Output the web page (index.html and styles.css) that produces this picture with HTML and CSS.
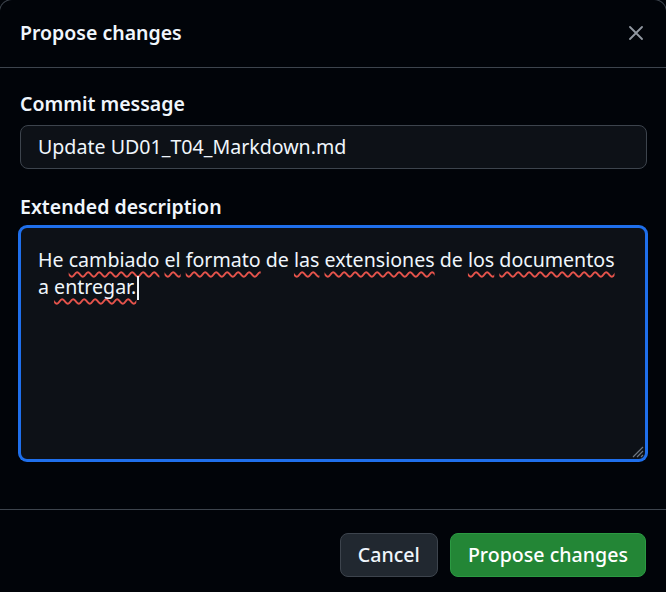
FILE: index.html
```html
<!DOCTYPE html>
<html lang="en">
<head>
<meta charset="utf-8">
<title>Propose changes</title>
<link rel="stylesheet" href="styles.css">
</head>
<body>
<div class="dialog">
  <header class="dialog-header">
    <h1 class="dialog-title">Propose changes</h1>
    <button class="close-btn" aria-label="Close">
      <svg width="14" height="14" viewBox="0 0 14 14"><path d="M1 1 L13 13 M13 1 L1 13" stroke="#9198a1" stroke-width="1.8" stroke-linecap="round"/></svg>
    </button>
  </header>
  <div class="dialog-body">
    <label class="field-label">Commit message</label>
    <div class="text-input">Update UD01_T04_Markdown.md</div>
    <label class="field-label field-label-2">Extended description</label>
    <div class="textarea">
      <div class="textarea-text">He <span class="sp">cambiado</span> <span class="sp">el</span> <span class="sp">formato</span> de <span class="sp">las</span> <span class="sp">extensiones</span> de <span class="sp">los</span> <span class="sp">documentos</span><br>a <span class="sp">entregar.</span><span class="caret"></span></div>
      <svg class="grip" width="14" height="14" viewBox="0 0 14 14"><path d="M13 3 L3 13 M13 7 L7 13 M13 11 L11 13" stroke="#6e7681" stroke-width="1.2"/></svg>
    </div>
  </div>
  <footer class="dialog-footer">
    <button class="btn btn-default">Cancel</button>
    <button class="btn btn-primary">Propose changes</button>
  </footer>
</div>
</body>
</html>
```

FILE: styles.css
```css
* { box-sizing: border-box; }
html, body {
  margin: 0;
  padding: 0;
  background: #010409;
  height: 100%;
}
body {
  font-family: "Noto Sans", "Open Sans", sans-serif;
  color: #f0f6fc;
  font-size: 19.6px;
  overflow: hidden;
}
.dialog {
  width: 666px;
  height: 592px;
  background: #010409;
  border-radius: 12px 12px 0 0;
  box-shadow: 0 0 0 1px #3d444d;
  display: flex;
  flex-direction: column;
}
.dialog-header {
  height: 68px;
  border-bottom: 1px solid #3d444d;
  display: flex;
  align-items: center;
  justify-content: space-between;
  padding: 0 23px 0 20px;
}
.dialog-title {
  margin: 0;
  font-size: 19.5px;
  font-weight: 600;
  line-height: 28px;
  padding-bottom: 2px;
}
.close-btn {
  background: none;
  border: 0;
  padding: 0;
  width: 14px;
  height: 14px;
  display: flex;
  margin-bottom: 2px;
}
.dialog-body {
  padding: 22px 19px 0 19px;
  height: 442px;
  border-bottom: 1px solid #3d444d;
  display: flex;
  flex-direction: column;
}
.field-label {
  display: block;
  font-size: 19.5px;
  font-weight: 600;
  line-height: 28px;
  margin: 0 0 7px 1px;
}
.field-label-2 {
  margin-top: 24px;
  margin-bottom: 5px;
}
.text-input {
  height: 44px;
  background: #0d1117;
  border: 1px solid #3d444d;
  border-radius: 8px;
  padding: 0 17px;
  display: flex;
  align-items: center;
  line-height: 28px;
  margin-left: 1px;
}
.textarea {
  position: relative;
  height: 235px;
  background: #0d1117;
  border: 2px solid #1f6feb;
  box-shadow: 0 0 0 1px #1f6feb;
  border-radius: 8px;
  padding: 18px 17px;
}
.textarea-text {
  line-height: 27px;
  white-space: nowrap;
}
.sp {
  text-decoration: underline wavy #e5534b;
  text-decoration-thickness: 1.5px;
  text-underline-offset: 4px;
  text-decoration-skip-ink: none;
}
.caret {
  display: inline-block;
  width: 2px;
  height: 24px;
  background: #f0f6fc;
  vertical-align: -6px;
  margin-left: 1px;
}
.grip {
  position: absolute;
  right: 1px;
  bottom: 1px;
}
.dialog-footer {
  display: flex;
  justify-content: flex-end;
  gap: 12px;
  padding: 23px 20px 0 20px;
}
.btn {
  height: 44px;
  font-family: inherit;
  font-size: 19.6px;
  font-weight: 500;
  border-radius: 8px;
  line-height: 28px;
  padding: 0 17px;
  color: #f0f6fc;
  cursor: pointer;
}
.btn-default {
  background: #212830;
  border: 1px solid #3d444d;
}
.btn-primary {
  background: #238636;
  border: 1px solid #2b9a42;
  color: #ffffff;
}
```
